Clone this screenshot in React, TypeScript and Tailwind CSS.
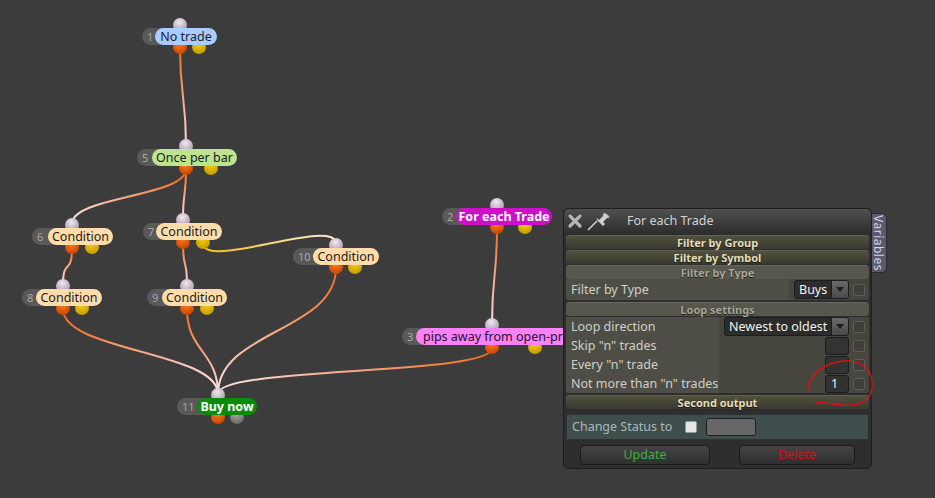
import React from "react";

type Out = { x: number; c: "o" | "y" | "g" };
type N = {
  n: string; label: string; x: number; lx: number; lw: number; y: number;
  bg: string; color: string; bold?: boolean; left?: boolean; top: number; outs: Out[];
};

const H = 17;
const nodes: N[] = [
  { n: "1", label: "No trade", x: 142, lx: 155, lw: 62, y: 28, bg: "#aaccff", color: "#1c1c2a", top: 180, outs: [{ x: 180, c: "o" }, { x: 199, c: "y" }] },
  { n: "5", label: "Once per bar", x: 137, lx: 152, lw: 85, y: 149, bg: "#bde38e", color: "#1c1c1c", top: 186, outs: [{ x: 186, c: "o" }, { x: 211, c: "y" }] },
  { n: "6", label: "Condition", x: 32, lx: 48, lw: 65, y: 228, bg: "#ffdcaa", color: "#1c1c1c", top: 72, outs: [{ x: 72, c: "o" }, { x: 92, c: "y" }] },
  { n: "7", label: "Condition", x: 143, lx: 156, lw: 66, y: 223, bg: "#ffdcaa", color: "#1c1c1c", top: 183, outs: [{ x: 183, c: "o" }, { x: 203, c: "y" }] },
  { n: "10", label: "Condition", x: 293, lx: 313, lw: 66, y: 248, bg: "#ffdcaa", color: "#1c1c1c", top: 336, outs: [{ x: 336, c: "o" }, { x: 355, c: "y" }] },
  { n: "8", label: "Condition", x: 22, lx: 36, lw: 66, y: 289, bg: "#ffdcaa", color: "#1c1c1c", top: 63, outs: [{ x: 63, c: "o" }, { x: 82, c: "y" }] },
  { n: "9", label: "Condition", x: 147, lx: 162, lw: 65, y: 289, bg: "#ffdcaa", color: "#1c1c1c", top: 187, outs: [{ x: 187, c: "o" }, { x: 207, c: "y" }] },
  { n: "11", label: "Buy now", x: 177, lx: 197, lw: 60, y: 398, bg: "#0c8a0c", color: "#ffffff", bold: true, top: 218, outs: [{ x: 218, c: "o" }, { x: 237, c: "g" }] },
  { n: "3", label: "pips away from open-price", x: 402, lx: 416, lw: 200, y: 328, bg: "#f982f5", color: "#2a1030", left: true, top: 492, outs: [{ x: 492, c: "o" }, { x: 535, c: "y" }] },
  { n: "2", label: "For each Trade", x: 442, lx: 456, lw: 96, y: 208, bg: "#cc10c8", color: "#ffffff", bold: true, top: 497, outs: [{ x: 497, c: "o" }, { x: 525, c: "y" }] },
];

const byN = (n: string) => nodes.find((k) => k.n === n)!;
const outPt = (n: string, i: number) => { const k = byN(n); return [k.outs[i].x, k.y + H + 3]; };
const inPt = (n: string) => { const k = byN(n); return [k.top, k.y - 4]; };

const wires: { from: string; i: number; to: string }[] = [
  { from: "1", i: 0, to: "5" },
  { from: "5", i: 0, to: "6" },
  { from: "5", i: 0, to: "7" },
  { from: "7", i: 1, to: "10" },
  { from: "6", i: 0, to: "8" },
  { from: "7", i: 0, to: "9" },
  { from: "8", i: 0, to: "11" },
  { from: "9", i: 0, to: "11" },
  { from: "10", i: 0, to: "11" },
  { from: "3", i: 0, to: "11" },
  { from: "2", i: 0, to: "3" },
];

function Canvas() {
  return (
    <svg className="absolute left-0 top-0" width={935} height={498}>
      <defs>
        <radialGradient id="cTop" cx="45%" cy="30%" r="70%">
          <stop offset="0%" stopColor="#f2e8f2" />
          <stop offset="100%" stopColor="#a898aa" />
        </radialGradient>
        <radialGradient id="cO" cx="45%" cy="30%" r="70%">
          <stop offset="0%" stopColor="#ff7a20" />
          <stop offset="100%" stopColor="#c94500" />
        </radialGradient>
        <radialGradient id="cY" cx="45%" cy="30%" r="70%">
          <stop offset="0%" stopColor="#f5cf10" />
          <stop offset="100%" stopColor="#c59a00" />
        </radialGradient>
        <radialGradient id="cG" cx="45%" cy="30%" r="70%">
          <stop offset="0%" stopColor="#a8a8a8" />
          <stop offset="100%" stopColor="#6a6a6a" />
        </radialGradient>
        {wires.map((w, idx) => {
          const [x1, y1] = outPt(w.from, w.i);
          const [x2, y2] = inPt(w.to);
          const yellow = w.i === 1;
          return (
            <linearGradient key={idx} id={`w${idx}`} gradientUnits="userSpaceOnUse" x1={x1} y1={y1} x2={x2} y2={y2}>
              <stop offset="0%" stopColor={yellow ? "#f2c020" : "#f06a1e"} />
              <stop offset="100%" stopColor={yellow ? "#f8ecd0" : "#fbe0e4"} />
            </linearGradient>
          );
        })}
      </defs>
      {wires.map((w, idx) => {
        const [x1, y1] = outPt(w.from, w.i);
        const [x2, y2] = inPt(w.to);
        const d = Math.max(28, Math.abs(y2 - y1) * 0.5);
        return (
          <path key={idx} d={`M ${x1} ${y1} C ${x1} ${y1 + d}, ${x2} ${y2 - d}, ${x2} ${y2}`} fill="none" stroke={`url(#w${idx})`} strokeWidth={2} />
        );
      })}
      {nodes.map((k) => (
        <g key={k.n}>
          <circle cx={k.top} cy={k.y - 3} r={7} fill="url(#cTop)" />
          {k.outs.map((o, j) => (
            <circle key={j} cx={o.x} cy={k.y + H + 2} r={7} fill={o.c === "o" ? "url(#cO)" : o.c === "y" ? "url(#cY)" : "url(#cG)"} />
          ))}
        </g>
      ))}
    </svg>
  );
}

function Node({ k }: { k: N }) {
  return (
    <div className="absolute" style={{ left: k.x, top: k.y, height: H }}>
      <div
        className="absolute top-0 h-full rounded-l-full bg-[#595959] pl-[5px] text-[11px] leading-[17px] text-[#a8a8a8]"
        style={{ width: k.lx - k.x + 8 }}
      >
        {k.n}
      </div>
      <div
        className={`absolute top-0 flex h-full items-center overflow-hidden whitespace-nowrap rounded-full text-[12.5px] leading-[16px] ${k.left ? "justify-start pl-[7px]" : "justify-center px-[6px]"} ${k.bold ? "font-bold" : ""}`}
        style={{ left: k.lx - k.x, width: k.lw, background: k.bg, color: k.color }}
      >
        {k.label}
      </div>
    </div>
  );
}

function Chk({ light }: { light?: boolean }) {
  return (
    <div className={`h-[12px] w-[12px] rounded-[2px] border ${light ? "border-[#999] bg-[#e6e6e6]" : "border-[#5e5e58] bg-[#3e3e3a]"}`} />
  );
}

function Header({ text, faded }: { text: string; faded?: boolean }) {
  return (
    <div
      className={`flex h-[14px] items-center justify-center rounded-[3px] border-t text-[11px] font-bold leading-none ${
        faded
          ? "border-[#666660] bg-[#57574e] text-[#a6a698]"
          : "border-[#5f5f50] bg-gradient-to-b from-[#51513f] to-[#393930] text-[#e4dcb8]"
      }`}
      style={{ textShadow: "0 1px 1px #1a1a14" }}
    >
      {text}
    </div>
  );
}

function Select({ text, w }: { text: string; w: number }) {
  return (
    <div className="flex h-[19px] overflow-hidden rounded-[3px] border border-[#1c1c1c] bg-[#2c2c2c]" style={{ width: w }}>
      <div className="flex flex-1 items-center pl-[4px] text-[12.5px] leading-[15px] text-[#f0f0f0]">{text}</div>
      <div className="flex w-[17px] items-center justify-center border-l border-[#1c1c1c] bg-gradient-to-b from-[#6a6a6a] to-[#4a4a4a]">
        <svg width="8" height="5" viewBox="0 0 8 5"><path d="M0 0 L8 0 L4 5 Z" fill="#1e1e1e" /></svg>
      </div>
    </div>
  );
}

function NumBox({ v }: { v?: string }) {
  return (
    <div className="flex h-[18px] w-[24px] items-center rounded-[3px] border border-[#1c1c1c] bg-[#333333] pl-[5px] text-[12.5px] leading-[15px] text-[#eeeeee]">
      {v}
    </div>
  );
}

function Row({ label, children, split = 720 - 567 }: { label: string; children: React.ReactNode; split?: number }) {
  return (
    <div className="flex h-[19px] items-stretch">
      <div className="flex items-center bg-[#4e4e46] pl-[5px] text-[12.5px] leading-[15px] text-[#cfcfc8]" style={{ width: split }}>
        {label}
      </div>
      <div className="flex flex-1 items-center justify-end gap-[4px] bg-[#46463f] pr-[4px]">{children}</div>
    </div>
  );
}

function Panel() {
  return (
    <div className="absolute left-[563px] top-[208px] h-[261px] w-[309px]">
      <div className="absolute left-[306px] top-[5px] flex h-[60px] w-[18px] items-center justify-center rounded-r-[5px] border border-[#2a2a30] bg-[#5a5a6c] text-[12px] tracking-[0.5px] text-[#d4d0e8] [writing-mode:vertical-rl]">
        Variables
      </div>
      <div className="relative flex h-full flex-col rounded-[5px] border border-[#1e1e1e] bg-[#2e2e2e]">
        <div className="flex h-[24px] items-center rounded-t-[5px] bg-gradient-to-b from-[#505050] to-[#2e2e2e] pl-[3px]">
          <svg width="16" height="16" viewBox="0 0 16 16">
            <path d="M3 3 L13 13 M13 3 L3 13" stroke="#3a3a3a" strokeWidth="5" strokeLinecap="round" />
            <path d="M3 3 L13 13 M13 3 L3 13" stroke="#b4b4b4" strokeWidth="3.2" strokeLinecap="round" />
          </svg>
          <svg width="26" height="20" viewBox="0 0 26 20" className="ml-[3px]">
            <path d="M2 19 L11 10" stroke="#d8d8d8" strokeWidth="1.4" />
            <path d="M9 7 L15 13 L17 11 L15 9 L19 5 L21 5 L21 3 L17 0 L15 1 L15 3 L11 7 L9 5 Z" fill="#cfcfcf" stroke="#8a8a8a" strokeWidth="0.6" transform="translate(2,2)" />
          </svg>
          <div className="ml-[15px] text-[12.5px] leading-[16px] text-[#d2d2d2]">For each Trade</div>
        </div>
        <div className="mt-[2px] flex flex-col gap-[1px] px-[2px]">
          <Header text="Filter by Group" />
          <Header text="Filter by Symbol" />
          <div className="flex flex-col overflow-hidden rounded-[3px]">
            <Header text="Filter by Type" faded />
            <div className="flex h-[21px] items-stretch">
              <div className="flex items-center bg-[#4e4e46] pl-[5px] text-[12.5px] leading-[15px] text-[#cfcfc8]" style={{ width: 790 - 567 }}>
                Filter by Type
              </div>
              <div className="flex flex-1 items-center justify-end gap-[4px] bg-[#46463f] pr-[4px]">
                <Select text="Buys" w={55} />
                <Chk />
              </div>
            </div>
          </div>
          <div className="mt-[1px] flex flex-col overflow-hidden rounded-[3px]">
            <Header text="Loop settings" faded />
            <div className="mt-[1px] flex flex-col">
              <Row label="Loop direction">
                <Select text="Newest to oldest" w={125} />
                <Chk />
              </Row>
              <Row label={'Skip "n" trades'}>
                <NumBox />
                <Chk />
              </Row>
              <Row label={'Every "n" trade'}>
                <NumBox />
                <Chk />
              </Row>
              <Row label={'Not more than "n" trades'}>
                <NumBox v="1" />
                <Chk />
              </Row>
            </div>
          </div>
          <div className="mt-[1px]">
            <Header text="Second output" />
          </div>
          <div className="mt-[4px] flex h-[26px] items-center border border-[#2a3434] bg-[#3f4d4d] pl-[5px]">
            <div className="w-[113px] text-[12.5px] leading-[16px] text-[#a9b9b9]">Change Status to</div>
            <Chk light />
            <div className="ml-[9px] h-[18px] w-[50px] rounded-[3px] border border-[#1e1e1e] bg-[#676767]" />
          </div>
          <div className="mt-[4px] flex items-center justify-between px-[14px]">
            <div className="flex h-[20px] w-[130px] items-center justify-center rounded-[4px] border border-[#1a1a1a] bg-gradient-to-b from-[#444] to-[#2f2f2f] text-[12.5px] leading-[16px] text-[#3fb03f]">
              Update
            </div>
            <div className="flex h-[20px] w-[116px] items-center justify-center rounded-[4px] border border-[#1a1a1a] bg-gradient-to-b from-[#444] to-[#2f2f2f] text-[12.5px] leading-[16px] text-[#d81010]">
              Delete
            </div>
          </div>
        </div>
      </div>
    </div>
  );
}

export default function App() {
  return (
    <div className="relative h-[498px] w-[935px] overflow-hidden bg-[#3c3c3c] font-['Noto_Sans',sans-serif]">
      <Canvas />
      {nodes.map((k) => (
        <Node key={k.n} k={k} />
      ))}
      <Panel />
      <svg className="pointer-events-none absolute left-0 top-0" width={935} height={498}>
        <path d="M 808 390 C 809 374, 826 362, 845 361 C 864 360, 874 372, 872 389 C 870 402, 860 406, 842 405 L 815 402" fill="none" stroke="#e01010" strokeWidth={1.3} />
      </svg>
    </div>
  );
}
